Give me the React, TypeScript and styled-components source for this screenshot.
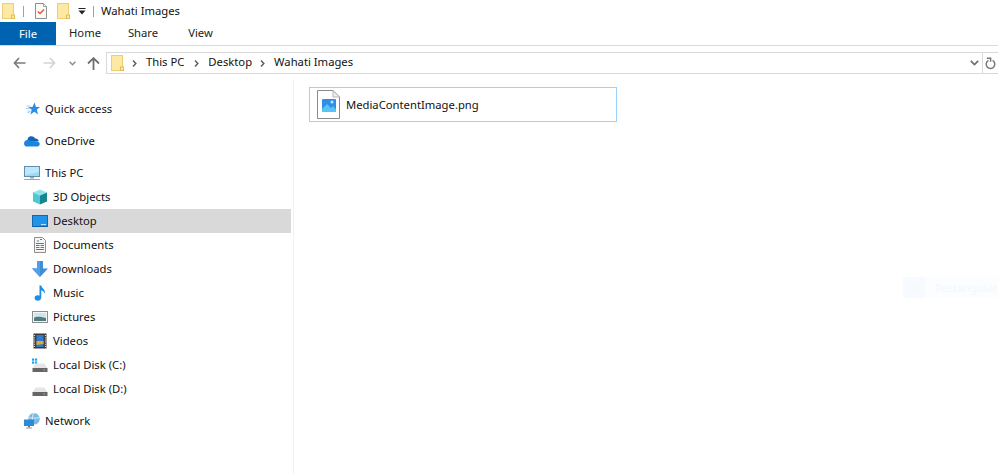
import React from "react";
import styled, { createGlobalStyle } from "styled-components";

const TEXT = "11.25px";

const Global = createGlobalStyle`
  html, body { margin: 0; padding: 0; background: #fff; }
  body { font-family: "Noto Sans", "Open Sans", "Liberation Sans", sans-serif; font-size: ${TEXT}; color: #000; overflow: hidden; }
`;

const Page = styled.div`
  width: 998px; height: 474px; position: relative; overflow: hidden;
  display: flex; flex-direction: column; background: #fff;
`;
const TitleBar = styled.div`
  height: 22px; display: flex; align-items: center; padding-left: 2px; box-sizing: border-box;
`;
const TitleText = styled.span`
  color: #111; margin-left: 7px; line-height: 20px; padding-bottom: 1px;
`;
const Sep = styled.span`
  width: 1px; height: 11px; background: #a0a0a0; flex: none;
  margin: ${p => p.$m};
`;
const Gap = styled.span`
  width: ${p => p.$w}px; flex: none;
`;
const Tabs = styled.div`
  height: 24px; display: flex; border-bottom: 1px solid #dadada; box-sizing: border-box;
`;
const FileTab = styled.div`
  width: 56px; height: 23px; background: #0063b1; color: #fff; display: flex;
  align-items: center; justify-content: center; padding-bottom: 1px; box-sizing: border-box;
`;
const Tab = styled.div`
  width: ${p => p.$w}px; display: flex; align-items: center; justify-content: center;
  color: #222; height: 23px; padding-bottom: 2px; box-sizing: border-box;
`;
const AddressRow = styled.div`
  height: 34px; display: flex; align-items: center; box-sizing: border-box;
`;
const Nav = styled.div`
  width: 106px; display: flex; align-items: center; flex: none; height: 100%;
`;
const NavBtn = styled.span`
  width: ${p => p.$w}px; display: flex; justify-content: center; flex: none;
`;
const AddressBox = styled.div`
  flex: 1; height: 22px; border: 1px solid #d9d9d9; border-right: none; display: flex;
  align-items: center; box-sizing: border-box; padding-left: 4px;
`;
const Crumb = styled.span`
  color: #111; margin-right: ${p => p.$gap}px; white-space: nowrap; line-height: 18px; padding-bottom: 2px;
`;
const Chevron = styled.span`
  margin: 0 9px 0 ${p => p.$left ?? 0}px; display: flex;
`;
const Spacer = styled.div`flex: 1;`;
const DropArea = styled.div`
  width: 15px; height: 100%; display: flex; align-items: center; justify-content: center;
  border-right: 1px solid #d9d9d9; flex: none;
`;
const Refresh = styled.div`
  width: 15px; height: 100%; display: flex; align-items: center; justify-content: center; flex: none;
`;
const Body = styled.div`
  flex: 1; display: flex; min-height: 0;
`;
const Sidebar = styled.div`
  width: 291px; flex: none; padding-top: 17px; box-sizing: border-box;
`;
const Divider = styled.div`
  width: 1px; margin-left: 2px; background: #f2f2f2; flex: none;
`;
const Group = styled.div`
  margin-bottom: 8px;
`;
const Row = styled.div`
  height: 24px; display: flex; align-items: center; box-sizing: border-box;
  padding-left: ${p => (p.$sub ? 32 : 24)}px;
  background: ${p => (p.$active ? "#d9d9d9" : "transparent")};
  color: #111;
`;
const RowIcon = styled.span`
  width: 16px; height: 16px; display: flex; flex: none; margin-right: 5px;
`;
const RowLabel = styled.span`
  padding-bottom: 2px;
`;
const Content = styled.div`
  flex: 1; padding: 7px 0 0 15px;
`;
const FileItem = styled.div`
  width: 308px; height: 35px; border: 1px solid #99d1ff; box-sizing: border-box;
  display: flex; align-items: center; padding-left: 7px;
`;
const FileName = styled.span`
  color: #111; margin-left: 6px;
`;
const Ghost = styled.div`
  position: absolute; left: 903px; top: 277px; width: 95px; height: 21px;
  background: #fbfdff; display: flex; align-items: center; overflow: hidden;
`;
const GhostBox = styled.span`
  width: 22px; height: 21px; background: #f7fbff; flex: none; display: flex;
  align-items: center; justify-content: center; margin-right: 10px;
`;
const GhostDot = styled.span`
  width: 4px; height: 4px; background: #fdf7f1;
`;
const GhostText = styled.span`
  font-size: 11px; color: #f4f7fb; white-space: nowrap;
`;
const FlatIcon = styled.svg`
  flex: none; display: block;
`;

const Folder = () => (
  <FlatIcon width="13" height="16" viewBox="0 0 13 16">
    <rect x="0.5" y="0.5" width="11" height="15" fill="#fee9a4" stroke="#ecce74" />
    <rect x="9.5" y="12" width="3" height="3.5" fill="#fde9a8" stroke="#e3bd52" />
  </FlatIcon>
);

const IconBack = ({ color }: { color: string }) => (
  <svg width="13" height="12" viewBox="0 0 13 12">
    <path d="M6 1 1.500 6 6 11M2 6h10.500" fill="none" stroke={color} strokeWidth="1.7" />
  </svg>
);
const IconFwd = ({ color }: { color: string }) => (
  <svg width="13" height="12" viewBox="0 0 13 12">
    <path d="M7 1l4.500 5L7 11M11 6H.5" fill="none" stroke={color} strokeWidth="1.7" />
  </svg>
);
const IconUp = () => (
  <svg width="13" height="13" viewBox="0 0 13 13">
    <path d="M1 6.500 6.500 1.200 12 6.500M6.500 2V13" fill="none" stroke="#6e6e6e" strokeWidth="1.8" />
  </svg>
);
const SmallDown = () => (
  <svg width="7" height="5" viewBox="0 0 7 5">
    <path d="M.6.8 3.500 3.700 6.400.8" fill="none" stroke="#8a8a8a" strokeWidth="1.400" />
  </svg>
);
const BoxDown = () => (
  <svg width="9" height="6" viewBox="0 0 9 6">
    <path d="M.8.8 4.500 4.500 8.200.8" fill="none" stroke="#6e6e6e" strokeWidth="1.700" />
  </svg>
);
const SmallRight = () => (
  <svg width="5" height="7" viewBox="0 0 5 7">
    <path d="M1 .6 3.800 3.500 1 6.400" fill="none" stroke="#5f5f5f" strokeWidth="1.500" />
  </svg>
);
const IconRefresh = () => (
  <svg width="11" height="13" viewBox="0 0 11 13">
    <path d="M3.400 3.400a4.300 4.300 0 1 0 4.200 0" fill="none" stroke="#777" strokeWidth="1.500" />
    <path d="M1.800 1.200h3.800v3.600" fill="none" stroke="#777" strokeWidth="1.500" />
  </svg>
);
const Check = () => (
  <FlatIcon width="12" height="16" viewBox="0 0 12 16">
    <path d="M.5.5h8l3 3v12H.5z" fill="#fafafa" stroke="#8f8f8f" />
    <path d="M8.500.5v3h3" fill="#e6e6e6" stroke="#a5a5a5" />
    <path d="M2.800 8.400 5 10.600 9 6.400" fill="none" stroke="#e4572e" strokeWidth="1.400" />
  </FlatIcon>
);
const QuickDown = () => (
  <FlatIcon width="8" height="7" viewBox="0 0 8 7">
    <path d="M.5.5h7" stroke="#222" strokeWidth="1" />
    <path d="M.5 2.500h7L4 6.500z" fill="#222" />
  </FlatIcon>
);

const svg16 = (children: React.ReactNode) => (
  <svg width="16" height="16" viewBox="0 0 16 16">{children}</svg>
);
const icons: Record<string, React.ReactNode> = {
  quick: svg16(<>
    <path d="M10.500 1.500 12 6l4 .1-3.200 2.700 1.200 4.700-3.700-2.800-3.900 2.800 1.300-4.700-3.400-2.700 4.200-.1z" fill="#2b8ee2" />
    <path d="M2.500 5h4M2 7.500h3.500M3.500 10h2.500M3.500 12l3-1.500" stroke="#9ccbf0" strokeWidth="1" />
  </>),
  onedrive: svg16(<>
    <path d="M3.500 7.500a4 4 0 0 1 3.200-4.300 4.800 4.800 0 0 1 4.600 2.400 3.400 3.400 0 0 1 3.500 2.700L6 9z" fill="#0f65b8" />
    <path d="M4 7c1.200-.2 2.300.2 3 1l.8.8c2.500-.8 5-.6 7.200.5 1.400 1.500.6 4.200-1.600 4.200H2.400C-.4 13.500-.9 8 2.300 7.300 2.900 7.100 3.400 7 4 7z" fill="#1b85de" />
  </>),
  pc: svg16(<>
    <rect x="0.5" y="1.500" width="15" height="10" fill="#9ed8f7" stroke="#5f90b0" />
    <path d="M1 2h14v5L1 10z" fill="#bfe7fb" />
    <rect x="6" y="12" width="4" height="1.500" fill="#a3a3a3" />
    <rect x="0" y="14" width="16" height="1" fill="#a7a7a7" />
  </>),
  objects: svg16(<>
    <path d="M8 .5 15 3.500 8 6.500 1 3.500z" fill="#8fe6ea" />
    <path d="M1 3.500 8 6.500V15.500L1 12.500z" fill="#4cc9d4" />
    <path d="M15 3.500 8 6.500V15.500L15 12.500z" fill="#17868f" />
  </>),
  desktop: svg16(<>
    <rect x="0.5" y="2.500" width="15" height="11" fill="#1e95e8" stroke="#1267ad" />
    <path d="M1 13h14v.6H1z" fill="#0e5c9e" />
    <path d="M9 11.500h5" stroke="#bfe3fb" strokeWidth="1" />
  </>),
  documents: svg16(<>
    <path d="M2.500.5h8l3 3v12h-11z" fill="#f6f6f6" stroke="#8e8e8e" />
    <path d="M5 4h2M8 2.500h2M4 6.500h8M4 8.500h3.500M8.500 8.500h3.500M4 10.500h3.500M8.500 10.500h3.500M4 12.500h8" stroke="#2f86c7" strokeWidth="1.100" />
  </>),
  downloads: svg16(<>
    <path d="M5 0h6v7.500h5L8 16 0 7.500h5z" fill="#3d8fd9" />
    <path d="M5 0h3v16L0 7.500h5z" fill="#549fe3" />
  </>),
  music: svg16(<>
    <ellipse cx="5.800" cy="13" rx="3.200" ry="2.800" fill="#1f8ee6" />
    <path d="M7.500.5h1.800c.4 3 4.500 3.800 3.500 8.500-.4-2-2.200-3.500-3.500-3.800V13H7.500z" fill="#1f8ee6" />
  </>),
  pictures: svg16(<>
    <rect x="0.500" y="2.500" width="15" height="11" fill="#f5f5f5" stroke="#8d8d8d" />
    <rect x="2" y="4" width="12" height="8" fill="#cfe4ef" />
    <path d="M2 9c3-2 6-1 12 0v3H2z" fill="#4f7d7a" />
  </>),
  videos: svg16(<>
    <rect x="1.500" y="0.500" width="13" height="15" fill="#3b3b3b" />
    <rect x="4.500" y="2" width="7" height="12" fill="#2c7bd0" />
    <path d="M4.500 8h7v3l-7 1z" fill="#e8a72e" />
    <path d="M2.500 2v12M13.500 2v12" stroke="#d8d8d8" strokeWidth="1.200" strokeDasharray="1 1.200" />
  </>),
  diskc: svg16(<>
    <rect x="0" y="1.500" width="2.200" height="2.200" fill="#19a3ee" /><rect x="3" y="1.500" width="2.200" height="2.200" fill="#19a3ee" />
    <rect x="0" y="4.500" width="2.200" height="2.200" fill="#19a3ee" /><rect x="3" y="4.500" width="2.200" height="2.200" fill="#19a3ee" />
    <path d="M3.500 6.500h9l3 4.500H.5z" fill="#e6e6e6" />
    <rect x="0.500" y="11" width="15" height="4" fill="#666" />
    <rect x="11.500" y="12.500" width="1.500" height="1" fill="#6fd26f" />
  </>),
  diskd: svg16(<>
    <path d="M3.500 6.500h9l3 4.500H.5z" fill="#e6e6e6" />
    <rect x="0.500" y="11" width="15" height="4" fill="#666" />
    <rect x="11.500" y="12.500" width="1.500" height="1" fill="#6fd26f" />
  </>),
  network: svg16(<>
    <circle cx="10" cy="5.800" r="5.800" fill="#7db9e4" />
    <path d="M10 0c-2 2-2 9 0 11.500M4.500 4.500c3 1 7 1 11 0" stroke="#d7ecf9" strokeWidth="1" fill="none" />
    <rect x="0" y="6.500" width="10" height="6.500" fill="#2b8bd6" />
    <rect x="4" y="13" width="2" height="1.500" fill="#777" />
    <rect x="2" y="14.500" width="6" height="1" fill="#9a9a9a" />
  </>),
};

const Nav0 = ({ icon, label }: { icon: string; label: string }) => (
  <Row><RowIcon>{icons[icon]}</RowIcon><RowLabel>{label}</RowLabel></Row>
);
const Nav1 = ({ icon, label, active }: { icon: string; label: string; active?: boolean }) => (
  <Row $sub $active={active}><RowIcon>{icons[icon]}</RowIcon><RowLabel>{label}</RowLabel></Row>
);

const PngIcon = () => (
  <FlatIcon width="23" height="29" viewBox="0 0 23 29">
    <path d="M.5.5h15.500l6.500 6.500v21.500H.5z" fill="#fff" stroke="#8a8a8a" />
    <path d="M16 .5V7h6.500z" fill="#efefef" stroke="#b5b5b5" />
    <rect x="5" y="9" width="14" height="13" rx="1" fill="#2f8fe8" />
    <path d="M5 22v-3l5-5 4 4 2-2 3 3.500V22z" fill="#57c4f5" />
    <circle cx="15" cy="12" r="1.500" fill="#bfe6fb" />
  </FlatIcon>
);

export default function App() {
  return (
    <Page>
      <Global />
      <TitleBar>
        <Folder />
        <Sep $m="0 11px 0 8px" />
        <Check />
        <Gap $w={10} />
        <Folder />
        <Gap $w={8} />
        <QuickDown />
        <Sep $m="0 0 0 7px" />
        <TitleText>Wahati Images</TitleText>
      </TitleBar>
      <Tabs>
        <FileTab>File</FileTab>
        <Tab $w={58}>Home</Tab>
        <Tab $w={58}>Share</Tab>
        <Tab $w={57}>View</Tab>
      </Tabs>
      <AddressRow>
        <Nav>
          <NavBtn $w={38}><IconBack color="#7b7b7b" /></NavBtn>
          <NavBtn $w={22}><IconFwd color="#d4d4d4" /></NavBtn>
          <NavBtn $w={24}><SmallDown /></NavBtn>
          <NavBtn $w={18}><IconUp /></NavBtn>
        </Nav>
        <AddressBox>
          <Folder />
          <Chevron $left={8}><SmallRight /></Chevron>
          <Crumb $gap={10}>This PC</Crumb>
          <Chevron><SmallRight /></Chevron>
          <Crumb $gap={8}>Desktop</Crumb>
          <Chevron><SmallRight /></Chevron>
          <Crumb $gap={0}>Wahati Images</Crumb>
          <Spacer />
          <DropArea><BoxDown /></DropArea>
          <Refresh><IconRefresh /></Refresh>
        </AddressBox>
      </AddressRow>
      <Body>
        <Sidebar>
          <Group><Nav0 icon="quick" label="Quick access" /></Group>
          <Group><Nav0 icon="onedrive" label="OneDrive" /></Group>
          <Group>
            <Nav0 icon="pc" label="This PC" />
            <Nav1 icon="objects" label="3D Objects" />
            <Nav1 icon="desktop" label="Desktop" active />
            <Nav1 icon="documents" label="Documents" />
            <Nav1 icon="downloads" label="Downloads" />
            <Nav1 icon="music" label="Music" />
            <Nav1 icon="pictures" label="Pictures" />
            <Nav1 icon="videos" label="Videos" />
            <Nav1 icon="diskc" label="Local Disk (C:)" />
            <Nav1 icon="diskd" label="Local Disk (D:)" />
          </Group>
          <Group><Nav0 icon="network" label="Network" /></Group>
        </Sidebar>
        <Divider />
        <Content>
          <FileItem>
            <PngIcon />
            <FileName>MediaContentImage.png</FileName>
          </FileItem>
        </Content>
      </Body>
      <Ghost>
        <GhostBox><GhostDot /></GhostBox>
        <GhostText>Rectangular</GhostText>
      </Ghost>
    </Page>
  );
}
